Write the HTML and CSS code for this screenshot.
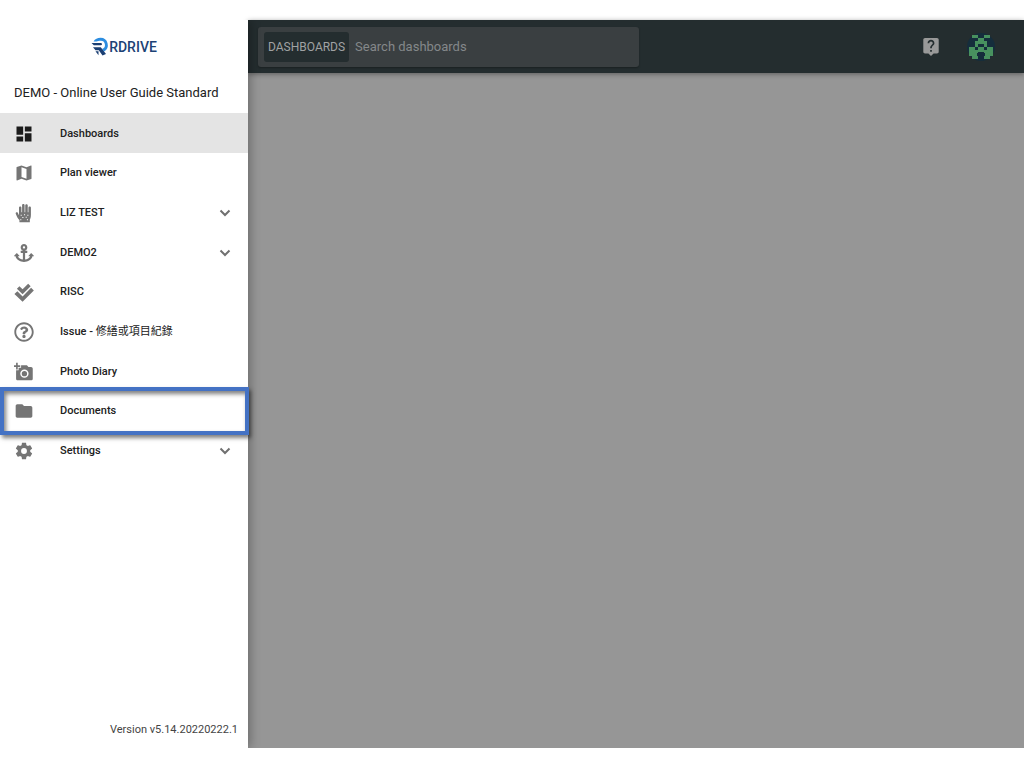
FILE: index.html
```html
<!DOCTYPE html>
<html lang="en">
<head>
<meta charset="utf-8">
<title>Dashboards</title>
<link rel="stylesheet" href="styles.css">
</head>
<body>
<div class="app">
  <aside class="sidebar">
    <a class="logo" href="#" aria-label="RDRIVE home">
      <svg class="logo-mark" viewBox="0 0 18 20" aria-hidden="true">
        <path class="logo-light" d="M2.500 4.500C4 2 6.500 .800 9.500 .800a7.300 7.300 0 0 1 3.500 13.700l-2-2.500a4.200 4.200 0 0 0-1.500-8.200C8 3.800 6.500 4.500 5.500 4.500z"/>
        <path class="logo-dark" d="M.5 6h9.300c1.600 0 1.600 2.300 0 2.300H2.800zM2 10.300h7.800L15 17l-3.500 1.500-3.700-5.300H4.500zM4.500 14.300h3v4z"/>
      </svg>
      <span>RDRIVE</span>
    </a>
    <h1 class="project">DEMO - Online User Guide Standard</h1>
    <nav class="menu">
      <a class="item active" href="#">
        <svg class="icon" viewBox="0 0 24 24"><path d="M3 13h8V3H3zm0 8h8v-6H3zm10 0h8V11h-8zm0-18v6h8V3z"/></svg>
        <span>Dashboards</span>
      </a>
      <a class="item" href="#">
        <svg class="icon" viewBox="0 0 24 24"><path d="M20.500 3l-.16.030L15 5.100 9 3 3.360 4.900c-.21.070-.36.250-.36.480V20.500c0 .280.220.500.500.500l.16-.030L9 18.900l6 2.100 5.640-1.900c.21-.070.360-.250.360-.480V3.500c0-.280-.220-.500-.500-.500zM15 19l-6-2.110V5l6 2.110z"/></svg>
        <span>Plan viewer</span>
      </a>
      <button class="item" type="button">
        <svg class="icon" viewBox="0 0 24 24"><path fill-rule="evenodd" d="M2 12.500c0-1.800 2.600-1.800 3 0l.5 1.500h.5V5.500c0-1.800 2.900-1.800 2.900 0V11h.8V2.500c0-1.900 3-1.900 3 0V11h.8V3c0-1.900 3-1.900 3 0v8h.8V5.500c0-1.900 3-1.900 3 0v9c0 3-.8 4.500-1.300 5.700V23H6.500v-2.500C4.500 18.500 3 15.500 2 12.500zM8 14v1.300h1.300V14zm4-.5v1.300h1.300v-1.300zm4 .5v1.300h1.300V14zm-6 2.800v1.300h1.300v-1.300zm4-.3v1.300h1.300v-1.300zm1.500 3v1.300h1.300v-1.300zm-8 0v1.300h1.300v-1.300z"/></svg>
        <span>LIZ TEST</span>
        <svg class="chevron" viewBox="0 0 12 12"><path d="M1.500 3.500L6 8l4.500-4.500"/></svg>
      </button>
      <button class="item" type="button">
        <svg class="icon" viewBox="0 0 576 512"><path d="M13 353h31.300C60 450 180 512 288 512c113 0 228-64 243.800-159.500H563c10.700 0 16-12.900 8.500-20.500l-67-67c-4.700-4.700-12.300-4.700-17 0l-67 67c-7.500 7.500-2.200 20.500 8.500 20.500h35.100c-16.200 54-86.100 86.700-144.100 93.900V256h52c6.600 0 12-5.400 12-12v-40c0-6.600-5.400-12-12-12h-52v-5.500c37.300-13.200 64-48.800 64-90.500C384 42.800 340.600-.300 287.300 0 234.900.300 192 43.500 192 96c0 41.700 26.700 77.300 64 90.500V192h-52c-6.600 0-12 5.400-12 12v40c0 6.600 5.400 12 12 12h52v190.300c-58.900-7.300-128.100-40.600-144.100-93.900H147c10.700 0 16-12.900 8.500-20.500l-67-67c-4.700-4.700-12.300-4.700-17 0l-67 67C-3 339.600 2.300 353 13 353zM288 64c17.600 0 32 14.400 32 32s-14.400 32-32 32-32-14.400-32-32 14.400-32 32-32z"/></svg>
        <span>DEMO2</span>
        <svg class="chevron" viewBox="0 0 12 12"><path d="M1.500 3.500L6 8l4.500-4.500"/></svg>
      </button>
      <a class="item" href="#">
        <svg class="icon" viewBox="0 0 24 24"><path d="M3.500 8L6.500 5l3.800 3.800L17 2l3 3-9.700 9.700zM.5 14.500L4 11l6.300 6.300L20.500 7l3.300 3.300L10.300 23.800z"/></svg>
        <span>RISC</span>
      </a>
      <a class="item" href="#">
        <svg class="icon" viewBox="0 0 512 512"><path d="M256 8C119 8 8 119.100 8 256c0 137 111 248 248 248s248-111 248-248C504 119.100 393 8 256 8zm0 448c-110.500 0-200-89.400-200-200 0-110.500 89.500-200 200-200 110.500 0 200 89.500 200 200 0 110.500-89.400 200-200 200zm107.200-255.200c0 67.100-72.400 68.100-72.400 92.900V300c0 6.600-5.400 12-12 12h-45.600c-6.600 0-12-5.400-12-12v-8.700c0-35.700 27.100-50 47.600-61.500 17.600-9.800 28.300-16.500 28.300-29.600 0-17.200-22-28.700-39.800-28.700-23.200 0-33.900 11-49 30-4.100 5.100-11.500 6.100-16.700 2.100l-27.800-21.100c-5.100-3.900-6.300-11.100-2.600-16.400C184.800 131.500 214.900 112 261.800 112c49.100 0 101.500 38.300 101.500 88.800zM298 368c0 23.200-18.800 42-42 42s-42-18.800-42-42 18.800-42 42-42 42 18.800 42 42z"/></svg>
        <span>Issue - <span class="han" lang="zh-Hant">修繕或項目紀錄</span></span>
      </a>
      <a class="item" href="#">
        <svg class="icon" viewBox="1 0 23 24"><path fill-rule="evenodd" d="M3 4V1h2v3h3v2H5v3H3V6H0V4zm3 6V7h3V4h7l1.830 2H21c1.100 0 2 .9 2 2v12c0 1.100-.9 2-2 2H5c-1.100 0-2-.9-2-2V10zm7 9a5 5 0 1 0 0-10 5 5 0 0 0 0 10zm0-1.800a3.200 3.200 0 1 1 0-6.400 3.200 3.200 0 0 1 0 6.400z"/></svg>
        <span>Photo Diary</span>
      </a>
      <a class="item marked" href="#">
        <svg class="icon" viewBox="0 0 24 24"><path d="M10 4H4c-1.100 0-2 .9-2 2v12c0 1.100.9 2 2 2h16c1.100 0 2-.9 2-2V8c0-1.100-.9-2-2-2h-8z"/></svg>
        <span>Documents</span>
      </a>
      <button class="item" type="button">
        <svg class="icon" viewBox="0 0 24 24"><path d="M19.430 12.980c.04-.320.070-.640.070-.980s-.03-.660-.07-.980l2.110-1.650c.19-.150.240-.420.120-.640l-2-3.460c-.12-.220-.39-.300-.61-.220l-2.490 1c-.520-.400-1.080-.730-1.690-.980l-.38-2.650C14.460 2.180 14.250 2 14 2h-4c-.250 0-.460.180-.490.420l-.38 2.650c-.610.250-1.170.590-1.690.980l-2.490-1c-.230-.090-.490 0-.610.220l-2 3.460c-.130.220-.070.490.120.640l2.110 1.650c-.04.320-.07.650-.07.980s.03.660.07.980l-2.110 1.650c-.190.150-.240.420-.120.640l2 3.460c.12.220.39.300.61.220l2.490-1c.520.400 1.080.730 1.690.980l.38 2.650c.03.240.24.420.49.420h4c.250 0 .460-.180.490-.420l.38-2.650c.610-.250 1.170-.590 1.690-.980l2.490 1c.23.090.49 0 .61-.220l2-3.460c.12-.220.070-.490-.120-.640zM12 15.500a3.500 3.500 0 1 1 0-7 3.500 3.500 0 0 1 0 7z"/></svg>
        <span>Settings</span>
        <svg class="chevron" viewBox="0 0 12 12"><path d="M1.500 3.500L6 8l4.500-4.500"/></svg>
      </button>
    </nav>
    <p class="version">Version v5.14.20220222.1</p>
  </aside>
  <div class="main">
    <header class="topbar">
      <div class="search">
        <label class="scope" for="search">DASHBOARDS</label>
        <input class="search-input" id="search" type="text" placeholder="Search dashboards">
      </div>
      <div class="actions">
        <button class="action" type="button" aria-label="Help">
          <svg class="help" viewBox="3 2 18 21"><path d="M19 2H5c-1.110 0-2 .9-2 2v14c0 1.100.89 2 2 2h4l3 3 3-3h4c1.100 0 2-.9 2-2V4c0-1.100-.9-2-2-2zm-6 16h-2v-2h2zm2.070-7.750l-.9.920C13.450 11.900 13 12.500 13 14h-2v-.500c0-1.100.450-2.100 1.170-2.830l1.240-1.260c.37-.360.590-.860.590-1.410 0-1.100-.9-2-2-2s-2 .9-2 2H8c0-2.210 1.790-4 4-4s4 1.790 4 4c0 .880-.36 1.680-.93 2.250z"/></svg>
        </button>
        <button class="action" type="button" aria-label="Account">
          <svg class="avatar" viewBox="0 0 28 28">
            <circle cx="14" cy="14" r="14" fill="#152d3c"/>
            <path fill="#48915f" d="M5 2h6v3H5zM17 2h6v3h-6zM11 5h6v3h-6zM8 8h12v3H8zM8 11h3v3H8zM17 11h3v3h-3zM11 14h6v5h-6zM5 14h3v3h3v3h-1v3h1v3H5v-3H2v-9zM20 14h6v9h-3v3h-6v-3h1v-3h-1v-3h3z"/>
          </svg>
        </button>
      </div>
    </header>
    <main class="content"></main>
  </div>
</div>
</body>
</html>
```
FILE: styles.css
```css
* { box-sizing: border-box; }

body {
  margin: 0;
  background: #fff;
  color: #212121;
  font-family: Roboto, "Noto Sans CJK TC", sans-serif;
}

.app {
  display: flex;
  min-height: 100vh;
  padding: 20px 0;
}

.sidebar {
  position: relative;
  z-index: 1;
  display: flex;
  flex-direction: column;
  flex: 0 0 248px;
  background: #fff;
  box-shadow: 2px 0 10px rgba(0, 0, 0, .3);
  clip-path: inset(0 -14px 0 0);
}

.logo {
  display: flex;
  align-items: center;
  justify-content: center;
  height: 53px;
  color: #1d4275;
  font-size: 14px;
  font-weight: 500;
  text-decoration: none;
}

.logo-mark { width: 18px; height: 20px; }
.logo-light { fill: #2c8de0; }
.logo-dark { fill: #1b3f73; }

.project {
  margin: 0;
  padding: 0 14px;
  font-size: 13px;
  font-weight: 400;
  line-height: 40px;
}

.menu {
  display: grid;
  grid-auto-rows: 1fr;
  min-height: 357px;
}

.item {
  position: relative;
  display: flex;
  align-items: center;
  gap: 26px;
  width: 100%;
  padding: 2px 17px 0 14px;
  border: 0;
  background: none;
  color: #212121;
  font: 500 11px/16px Roboto, "Noto Sans CJK TC", sans-serif;
  text-align: left;
  text-decoration: none;
}

.item.active { background: #e4e4e4; }
.icon { width: 20px; height: 20px; fill: #757575; }
.active .icon { fill: #1b1b1b; }
.han { font-weight: 400; }

.chevron {
  width: 12px;
  height: 12px;
  margin-left: auto;
  fill: none;
  stroke: #707070;
  stroke-width: 2;
}

.marked::after {
  content: "";
  position: absolute;
  inset: -4px -1px -5px 0;
  border: 4px solid #4472c4;
  box-shadow: 2px 3px 4px rgba(0, 0, 0, .5), inset 2px 3px 4px rgba(0, 0, 0, .5);
  pointer-events: none;
}

.version {
  margin: auto 10px 10px;
  color: #444;
  font-size: 11px;
  line-height: 16px;
  text-align: right;
}

.main {
  display: flex;
  flex: 1;
  flex-direction: column;
  min-width: 0;
  background: #969696;
}

.topbar {
  display: flex;
  align-items: center;
  justify-content: space-between;
  height: 53px;
  padding: 0 29px 0 10px;
  background: #242d2f;
  box-shadow: 0 1px 5px rgba(0, 0, 0, .4);
}

.search {
  display: flex;
  align-items: center;
  flex: 0 1 381px;
  gap: 6px;
  height: 40px;
  padding: 0 6px;
  border-radius: 3px;
  background: #3a3f41;
  box-shadow: 0 1px 2px rgba(0, 0, 0, .3);
}

.scope {
  padding: 0 4px;
  border-radius: 3px;
  background: #242d2f;
  color: #a0a2a3;
  font-size: 12px;
  font-weight: 400;
  line-height: 30px;
}

.search-input {
  flex: 1;
  min-width: 0;
  padding: 0;
  border: 0;
  outline: 0;
  background: none;
  color: #a0a2a3;
  font: 13px/20px Roboto, sans-serif;
}

.search-input::placeholder { color: #84888a; opacity: 1; }

.actions { display: flex; align-items: center; gap: 28px; }

.action {
  display: flex;
  padding: 0;
  border: 0;
  background: none;
}

.help { width: 16px; height: 18px; fill: #999; }
.avatar { width: 28px; height: 28px; }
.content { flex: 1; }
```
